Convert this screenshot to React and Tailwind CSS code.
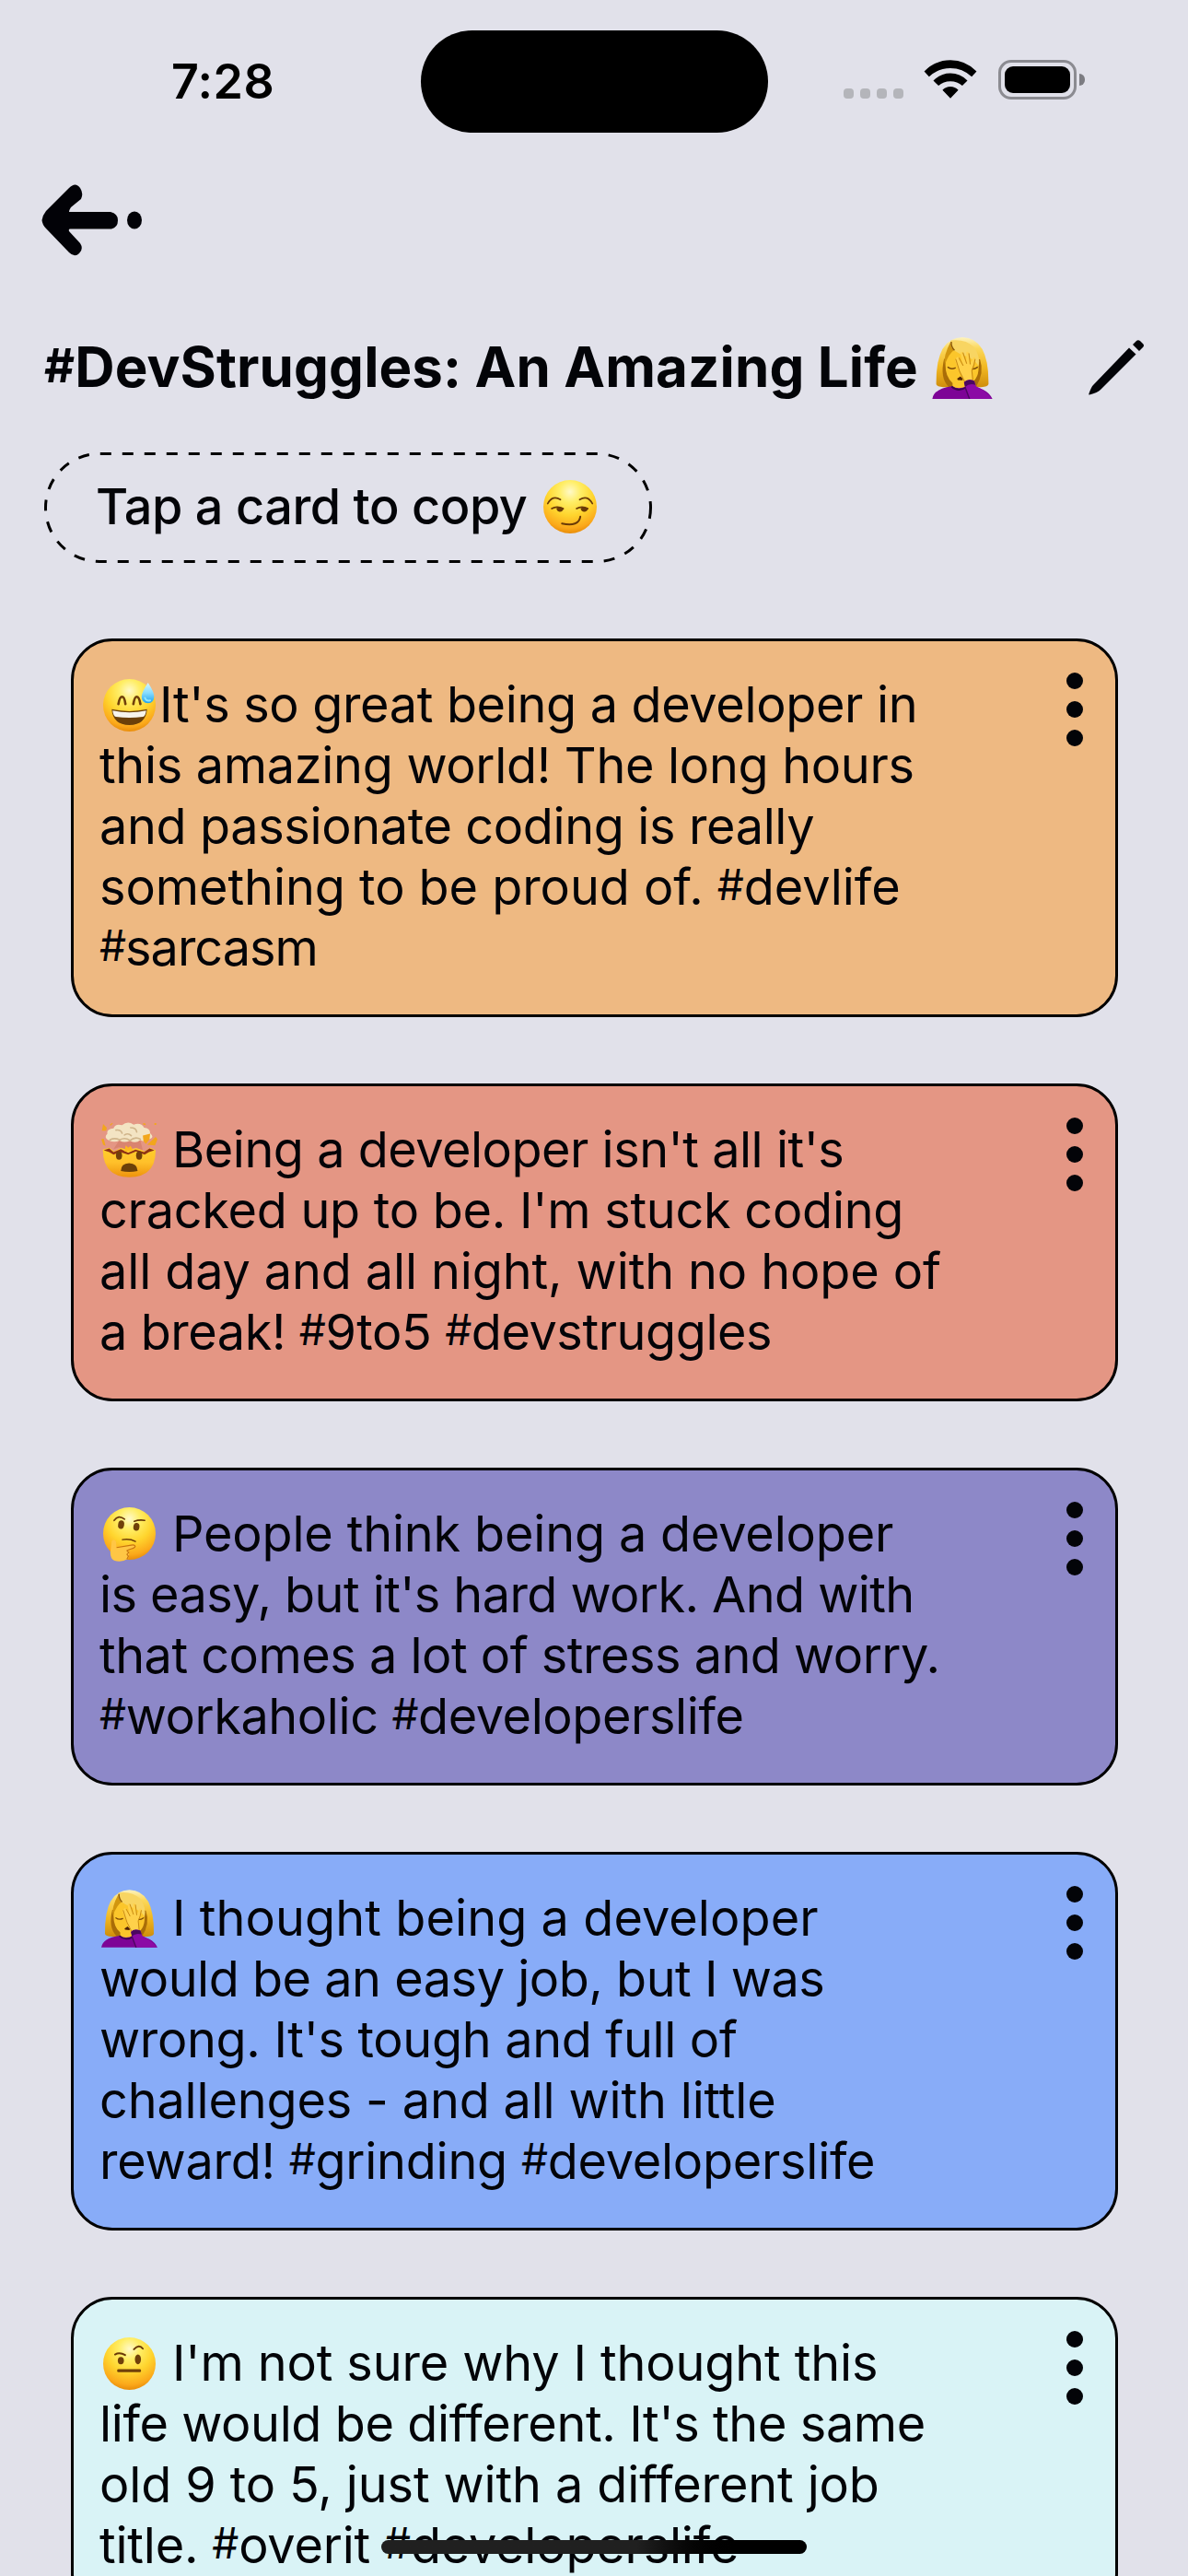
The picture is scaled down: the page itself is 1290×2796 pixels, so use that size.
import { useId } from "react";

function FaceGradient({ id }) {
  return (
    <radialGradient id={id} cx="50%" cy="22%" r="80%">
      <stop offset="0" stopColor="#fff9c8" />
      <stop offset="0.25" stopColor="#ffee66" />
      <stop offset="0.55" stopColor="#ffd52e" />
      <stop offset="0.85" stopColor="#fba81a" />
      <stop offset="1" stopColor="#e58806" />
    </radialGradient>
  );
}

function Smirk({ className }) {
  const id = useId();
  return (
    <svg viewBox="0 0 172 172" className={className} role="img" aria-label="smirking face">
      <defs><FaceGradient id={id} /></defs>
      <circle cx="86" cy="86" r="86" fill={`url(#${id})`} />
      <g fill="none" stroke="#6a3a07" strokeLinecap="round">
        <path d="M14 76Q30 47 55 63M117 63Q142 47 158 76" strokeWidth="5" />
        <path d="M27 92Q44 82 64 92M107 92Q124 82 143 92" strokeWidth="5" />
        <path d="M60 140Q114 151 119 118" strokeWidth="6" />
      </g>
      <path d="M42 91Q54 84 65 92Q63 103 52 102Q43 100 42 91ZM120 91Q132 84 144 92Q141 103 130 102Q121 100 120 91Z" fill="#6a3a07" />
    </svg>
  );
}

function GrinSweat({ className }) {
  const id = useId();
  const drop = useId();
  return (
    <svg viewBox="0 0 172 172" className={className} role="img" aria-label="grinning face with sweat">
      <defs>
        <FaceGradient id={id} />
        <linearGradient id={drop} x1="0" y1="0" x2="0" y2="1">
          <stop offset="0" stopColor="#d5f5ff" />
          <stop offset="0.5" stopColor="#86dcff" />
          <stop offset="1" stopColor="#20a3ee" />
        </linearGradient>
      </defs>
      <circle cx="86" cy="86" r="86" fill={`url(#${id})`} />
      <path d="M50 82Q54 58 62 58Q70 58 73 82M99 82Q103 58 110 58Q118 58 122 82" fill="none" stroke="#70400a" strokeWidth="8" strokeLinecap="round" />
      <path d="M28 99Q86 112 144 99Q140 150 86 151Q32 150 28 99Z" fill="#6b4009" />
      <path d="M31 103Q86 116 141 103Q139 121 130 124Q86 130 42 124Q33 121 31 103Z" fill="#f7f4ec" />
      <path d="M147 12Q167 42 167 57Q167 78 147 79Q126 78 126 57Q127 42 147 12Z" fill={`url(#${drop})`} />
      <path d="M137 62Q141 74 154 70" fill="none" stroke="#8fe6ff" strokeWidth="6" strokeLinecap="round" />
    </svg>
  );
}

function Exploding({ className }) {
  const id = useId();
  return (
    <svg viewBox="0 0 184 184" className={className} role="img" aria-label="exploding head">
      <defs>
        <linearGradient id={id} x1="0" y1="0" x2="0" y2="1">
          <stop offset="0" stopColor="#ffd02b" />
          <stop offset="0.5" stopColor="#ffc02a" />
          <stop offset="1" stopColor="#ee930c" />
        </linearGradient>
      </defs>
      <path d="M5 90L26 84L42 96L66 84L90 92L118 84L142 96L160 84L178 92Q178 180 92 180Q6 180 5 90Z" fill={`url(#${id})`} />
      <path d="M8 92L26 86L40 98L64 88L88 100L112 90L140 98L158 86L174 92L156 98L142 106L114 96L88 106L62 98L40 106L26 98Z" fill="#8f3315" />
      <path d="M58 60L128 60L136 92L112 84L84 90L58 82L40 88Z" fill="#d98470" />
      <path d="M80 76L88 84L96 78L104 92L90 94L76 96Z" fill="#ffb81c" />
      <path d="M26 60Q6 52 20 38Q16 22 40 20Q46 4 68 10Q86-6 106 8Q130 0 140 18Q160 20 160 36Q176 50 156 56Q144 68 128 58Q112 72 94 60Q76 70 60 60Q42 68 26 60Z" fill="#f3e4c3" />
      <path d="M28 58Q44 50 60 58Q78 48 94 60Q112 46 128 56M48 26Q64 24 68 36M96 18Q114 18 116 32M76 42Q88 34 98 44" fill="none" stroke="#d0b58b" strokeWidth="5" strokeLinecap="round" />
      <path d="M6 6L18 18L16 28L2 28ZM28 8L36 2L38 4L30 12ZM136 4L144 4L146 10L138 8ZM174 3L180 3L180 9L174 9ZM136 44L160 38L158 56L146 72L138 62ZM150 74L178 48L184 56L176 76ZM0 56L8 54L14 78L6 74Z" fill="#f2a61c" />
      <ellipse cx="58" cy="109" rx="10" ry="14" fill="#70400a" />
      <ellipse cx="124" cy="109" rx="10" ry="14" fill="#70400a" />
      <path d="M64 160Q64 135 91 134Q118 135 119 160Q92 166 64 160Z" fill="#6b4009" />
    </svg>
  );
}

function Thinking({ className }) {
  const id = useId();
  return (
    <svg viewBox="0 0 172 178" className={className} role="img" aria-label="thinking face">
      <defs><FaceGradient id={id} /></defs>
      <circle cx="86" cy="86" r="86" fill={`url(#${id})`} />
      <g fill="none" stroke="#6a3a07" strokeLinecap="round">
        <path d="M36 43Q50 23 70 39M102 46Q118 40 136 43" strokeWidth="5" />
        <path d="M63 106Q88 102 106 112" strokeWidth="4" />
      </g>
      <ellipse cx="59" cy="57" rx="10" ry="14" fill="#70400a" transform="rotate(8 59 57)" />
      <ellipse cx="109" cy="64" rx="10" ry="13" fill="#70400a" transform="rotate(8 109 64)" />
      <path d="M28 112Q34 100 42 112L44 132L84 126Q102 120 105 128Q106 136 88 138L82 142Q88 152 82 168Q60 182 36 174Q22 168 24 144Z" fill="#ffc645" />
      <path d="M44 132L92 124Q104 122 105 128Q104 134 86 138L78 142L84 148L78 154L83 160L78 170" fill="none" stroke="#c87510" strokeWidth="3.5" strokeLinejoin="round" />
    </svg>
  );
}

function RaisedBrow({ className }) {
  const id = useId();
  return (
    <svg viewBox="0 0 172 172" className={className} role="img" aria-label="face with raised eyebrow">
      <defs><FaceGradient id={id} /></defs>
      <circle cx="86" cy="86" r="86" fill={`url(#${id})`} />
      <path d="M39 56Q54 47 72 58M101 39Q118 21 130 37" fill="none" stroke="#6a3a07" strokeWidth="6" strokeLinecap="round" />
      <ellipse cx="58" cy="76" rx="10" ry="12" fill="#70400a" />
      <ellipse cx="114" cy="72" rx="10" ry="16" fill="#70400a" />
      <rect x="46" y="104" width="78" height="10" rx="4" fill="#70400a" />
    </svg>
  );
}

function Facepalm({ className }) {
  const id = useId();
  return (
    <svg viewBox="0 0 184 189" className={className} role="img" aria-label="woman facepalming">
      <defs>
        <linearGradient id={id} x1="0" y1="0" x2="0" y2="1">
          <stop offset="0" stopColor="#fdf3c0" />
          <stop offset="0.22" stopColor="#fbd85c" />
          <stop offset="0.6" stopColor="#f2b821" />
          <stop offset="1" stopColor="#cf8d0c" />
        </linearGradient>
      </defs>
      <path d="M12 144Q10 2 92 0Q174 2 172 144Q170 152 150 153L34 153Q14 152 12 144Z" fill={`url(#${id})`} />
      <path d="M36 66Q22 124 50 152L134 152Q160 110 146 68Z" fill="#a96d08" />
      <path d="M40 84Q42 52 58 38Q100 56 140 70Q148 120 122 138L108 144L108 162L62 162L62 140Q40 122 40 84Z" fill="#fbc62b" />
      <path d="M56 10Q58 42 96 56Q128 66 142 88Q148 60 128 30Q100 4 56 10Z" fill="#f8d562" />
      <path d="M57 12Q54 30 66 40Q52 48 38 84Q32 60 57 12Z" fill="#d1960f" />
      <path d="M58 14Q57 30 68 40" fill="none" stroke="#8a5606" strokeWidth="4" />
      <path d="M0 189Q4 158 60 150Q80 162 104 150Q168 152 184 189Z" fill="#7d0496" />
      <path d="M59 151Q80 170 106 152" fill="none" stroke="#3c0550" strokeWidth="5" />
      <path d="M48 92Q58 100 70 94M122 97Q130 98 138 92" fill="none" stroke="#7c4a08" strokeWidth="4" strokeLinecap="round" />
      <path d="M76 127L86 120L94 128L92 132L78 131Z" fill="#4f2207" />
      <path d="M74 62Q78 58 82 64L92 82L86 48Q90 42 94 48L104 76L104 46Q108 42 112 48L116 80L126 62Q132 60 132 66Q128 86 120 102L124 136L100 142L84 108L70 72Z" fill="#ffd14a" />
      <path d="M82 64L94 86M94 48L105 80M112 50L116 82M72 68L84 106L100 138M131 68Q128 88 121 102L124 132" fill="none" stroke="#c98a12" strokeWidth="3" strokeLinecap="round" />
      <path d="M97 138Q108 126 128 134L134 150Q162 162 182 189L112 189Z" fill="#8b0aa5" />
      <path d="M97 138Q108 126 128 134L132 146Q114 140 100 152Z" fill="#4b075f" />
      <path d="M100 152L114 189" fill="none" stroke="#4b075f" strokeWidth="4" />
    </svg>
  );
}

const cards = [
  {
    color: "bg-[#eeb982]", Emoji: GrinSweat, emojiClass: "ml-1 h-[57px] w-[57px]", gap: "gap-1",
    lines: [
      ["It's so great being a developer in", "tracking-[-0.34px]"],
      ["this amazing world! The long hours", "tracking-[-0.31px]"],
      ["and passionate coding is really", "tracking-[-0.37px]"],
      ["something to be proud of. #devlife", "tracking-[-0.05px]"],
      ["#sarcasm", "tracking-[-1px]"],
    ],
  },
  {
    color: "bg-[#e49684]", Emoji: Exploding, emojiClass: "ml-0.5 h-[61px] w-[61px]", gap: "gap-4",
    lines: [
      ["Being a developer isn't all it's", "tracking-[-0.49px]"],
      ["cracked up to be. I'm stuck coding", "tracking-[-0.26px]"],
      ["all day and all night, with no hope of", "tracking-[-0.12px]"],
      ["a break! #9to5 #devstruggles", "tracking-[-0.43px]"],
    ],
  },
  {
    color: "bg-[#8d88c8]", Emoji: Thinking, emojiClass: "ml-1 h-[59px] w-[57px]", gap: "gap-[18px]",
    lines: [
      ["People think being a developer", "tracking-[-0.17px]"],
      ["is easy, but it's hard work. And with", "tracking-[-0.58px]"],
      ["that comes a lot of stress and worry.", "tracking-[-0.5px]"],
      ["#workaholic #developerslife", "tracking-[-0.41px]"],
    ],
  },
  {
    color: "bg-[#88acf8]", Emoji: Facepalm, emojiClass: "ml-0.5 h-[63px] w-[61px]", gap: "gap-4",
    lines: [
      ["I thought being a developer", "tracking-[0.08px]"],
      ["would be an easy job, but I was", "tracking-[-0.48px]"],
      ["wrong. It's tough and full of", "tracking-[-0.34px]"],
      ["challenges - and all with little", "tracking-[-0.17px]"],
      ["reward! #grinding #developerslife", "tracking-[-0.25px]"],
    ],
  },
  {
    color: "bg-[#d9f3f6]", Emoji: RaisedBrow, emojiClass: "ml-1 h-[57px] w-[57px]", gap: "gap-[18px]",
    lines: [
      ["I'm not sure why I thought this", "tracking-[-0.13px]"],
      ["life would be different. It's the same", "tracking-[-0.39px]"],
      ["old 9 to 5, just with a different job", "tracking-[-0.12px]"],
      ["title. #overit #developerslife", "tracking-[-0.2px]"],
    ],
  },
];

// Hash signs sit slightly smaller and higher than the capitals around them.
function Tagged({ text }) {
  return text.split(/(#)/).map((part, i) =>
    part === "#" ? <span key={i} className="align-[0.1em] text-[0.85em] leading-none">#</span> : part
  );
}

function Card({ color, Emoji, emojiClass, gap, lines }) {
  return (
    <article className={`flex items-start justify-between rounded-[45px] border-[3px] border-black pt-9 pr-[35px] pb-[39px] pl-7 ${color}`}>
      <div className="text-[54px] leading-[66px] whitespace-nowrap">
        {lines.map(([text, tracking], i) => (
          <div key={text} className={`flex h-[66px] items-center ${gap} ${tracking}`}>
            {i === 0 && <Emoji className={`shrink-0 ${emojiClass}`} />}
            <span><Tagged text={text} /></span>
          </div>
        ))}
      </div>
      <button aria-label="Card options" className="-mt-0.5 flex flex-col gap-[13px]">
        <span className="size-[18px] rounded-full bg-[#030408]" />
        <span className="size-[18px] rounded-full bg-[#030408]" />
        <span className="size-[18px] rounded-full bg-[#030408]" />
      </button>
    </article>
  );
}

function StatusBar() {
  return (
    <header className="flex h-[178px] items-start pl-[186px]">
      <time className="mt-[57px] w-[271px] text-[52px] leading-[63px] font-semibold tracking-[0.4px] text-black">7:28</time>
      <div className="mt-[33px] h-[111px] w-[377px] rounded-full bg-black" />
      <div className="mt-[65px] ml-[82px] flex h-[43px]">
        <div className="mt-[31px] flex gap-[7px]">
          <span className="size-[11px] rounded-[4px] bg-[#b4b5ba]" />
          <span className="size-[11px] rounded-[4px] bg-[#b4b5ba]" />
          <span className="size-[11px] rounded-[4px] bg-[#b4b5ba]" />
          <span className="size-[11px] rounded-[4px] bg-[#b4b5ba]" />
        </div>
        <svg viewBox="0 0 174 127" className="ml-[22px] h-[42px] w-[58px]">
          <path d="M1 38Q37 1 87 1Q137 1 173 38L157 55Q127 27 87 27Q47 27 17 55ZM31 68Q55 44 87 44Q119 44 143 68L126 85Q110 70 87 70Q64 70 48 85ZM61 99Q72 88 87 88Q102 88 113 99L87 126Z" fill="#000" />
        </svg>
        <div className="ml-[23px] flex h-[43px] w-[85px] rounded-[14px] border-[3px] border-[#8b8b91] p-1">
          <div className="flex-1 rounded-[9px] bg-black" />
        </div>
        <div className="mt-[15px] ml-[3px] h-[13px] w-[6px] rounded-r-full bg-[#7c7c82]" />
      </div>
    </header>
  );
}

export default function App() {
  return (
    <main className="relative h-[2796px] w-[1290px] overflow-hidden bg-[#e1e1ea] font-['Inter',sans-serif] text-[#030408]">
      <StatusBar />
      <nav className="h-[178px] pt-[22px] pl-[45px]">
        <svg viewBox="0 0 112 78" className="h-[78px] w-[112px]" aria-label="Back">
          <path d="M0.500 39Q1 34 5 29L30 4Q37-3 42 4Q46 10 43 16L32 25Q30 28 30 30H75Q83 32 83 39Q83 47 76 48.500H32Q29 48 30 51L42 64Q46 70 41 75Q36 80 30 74L5 48Q1 44 0.500 39Z" fill="#020207" />
          <ellipse cx="101" cy="39" rx="8" ry="9.500" fill="#020207" />
        </svg>
      </nav>
      <div className="flex h-[86px] items-center pl-[48px]">
        <h1 className="-mt-0.5 text-[60px] leading-[86px] font-bold tracking-[0.12px] whitespace-nowrap"><Tagged text="#DevStruggles: An Amazing Life" /></h1>
        <Facepalm className="ml-[15px] h-[67px] w-[66px]" />
        <svg viewBox="0 0 60 60" className="mr-[48px] ml-auto h-[60px] w-[60px]" aria-label="Edit">
          <path d="M44 8.500L51.500 15.500L13 54Q10 57 1 59.500Q0 60 0.500 58Q3 51 5 49ZM48 5L52 1Q54-0.500 56.500 1.500L59 4Q61 6 59 8L55 12Z" fill="#030408" />
        </svg>
      </div>
      <div className="relative mt-[49px] ml-[48px] flex h-[120px] w-[660px] items-center pb-[3px] pl-[56px]">
        <svg viewBox="0 0 660 120" className="absolute inset-0 h-full w-full">
          <path d="M658.500 60A58.500 58.500 0 0 1 600 118.500H60A58.500 58.500 0 0 1 60 1.500H600A58.500 58.500 0 0 1 658.500 60" fill="none" stroke="#000" strokeWidth="3" strokeDasharray="12 12" />
        </svg>
        <p className="text-[54px] leading-[66px] font-medium tracking-[-0.47px] whitespace-nowrap">Tap a card to copy</p>
        <Smirk className="ml-[18px] h-[58px] w-[58px]" />
      </div>
      <section className="mt-[82px] mr-[76px] ml-[77px] flex flex-col gap-[72px]">
        {cards.map((card) => <Card key={card.color} {...card} />)}
      </section>
      <div className="absolute bottom-6 left-[414px] h-[15px] w-[462px] rounded-full bg-linear-to-r from-[#202020] from-60% to-black to-85%" />
    </main>
  );
}
